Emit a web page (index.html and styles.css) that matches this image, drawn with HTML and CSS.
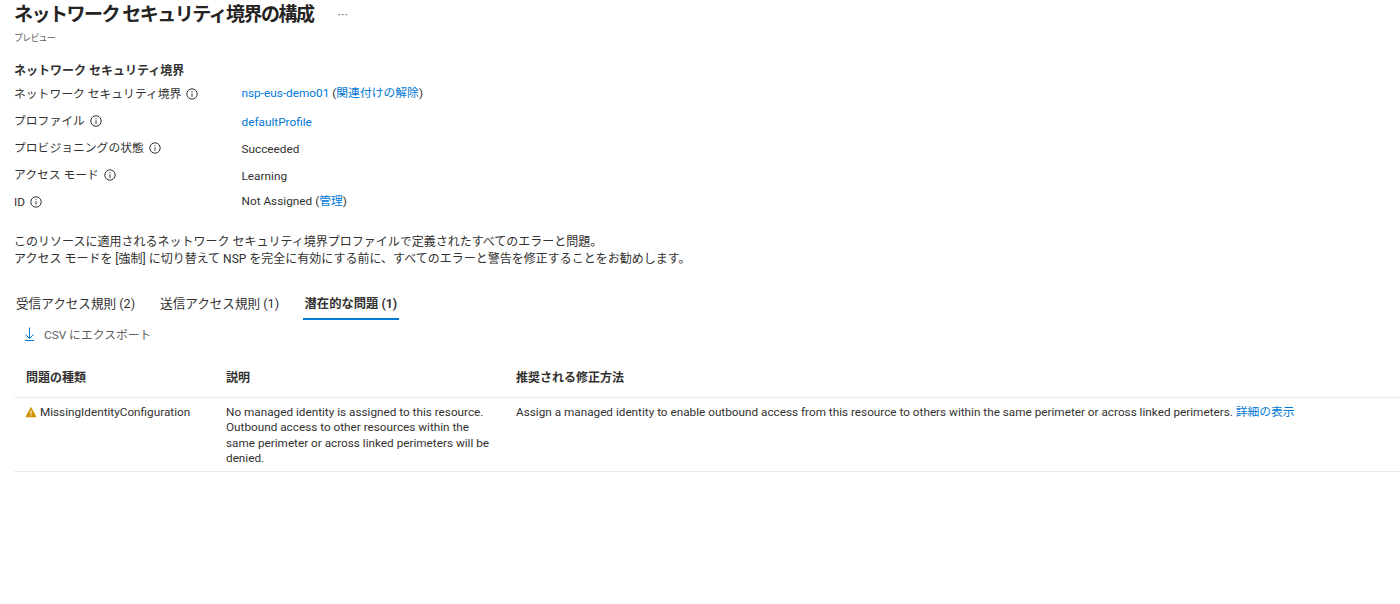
FILE: index.html
```html
<!DOCTYPE html>
<html lang="ja">
<head>
    <meta charset="UTF-8">
    <title>ネットワーク セキュリティ境界の構成</title>
    <link rel="stylesheet" href="styles.css">
</head>
<body>
    <header class="page-head">
        <div class="title-row">
            <h1>ネットワーク セキュリティ境界の構成</h1>
            <span class="more">···</span>
        </div>
        <div class="subtitle">プレビュー</div>
    </header>

    <h2 class="section-title">ネットワーク セキュリティ境界</h2>
    <div class="props">
        <div class="prop prop-a">
            <span class="label">ネットワーク セキュリティ境界 <svg class="info" viewBox="0 0 12 12"><circle cx="6" cy="6" r="5.2"/><path d="M6 5.3v3.4M6 3.2v1"/></svg></span>
            <span class="value"><a href="#">nsp-eus-demo01</a> (<a href="#">関連付けの解除</a>)</span>
        </div>
        <div class="prop prop-b first">
            <span class="label">プロファイル <svg class="info" viewBox="0 0 12 12"><circle cx="6" cy="6" r="5.2"/><path d="M6 5.3v3.4M6 3.2v1"/></svg></span>
            <span class="value"><a href="#">defaultProfile</a></span>
        </div>
        <div class="prop prop-b">
            <span class="label">プロビジョニングの状態 <svg class="info" viewBox="0 0 12 12"><circle cx="6" cy="6" r="5.2"/><path d="M6 5.3v3.4M6 3.2v1"/></svg></span>
            <span class="value">Succeeded</span>
        </div>
        <div class="prop prop-b">
            <span class="label">アクセス モード <svg class="info" viewBox="0 0 12 12"><circle cx="6" cy="6" r="5.2"/><path d="M6 5.3v3.4M6 3.2v1"/></svg></span>
            <span class="value">Learning</span>
        </div>
        <div class="prop prop-c">
            <span class="label">ID <svg class="info" viewBox="0 0 12 12"><circle cx="6" cy="6" r="5.2"/><path d="M6 5.3v3.4M6 3.2v1"/></svg></span>
            <span class="value">Not Assigned (<a href="#">管理</a>)</span>
        </div>
    </div>

    <p class="note">このリソースに適用されるネットワーク セキュリティ境界プロファイルで定義されたすべてのエラーと問題。<br>アクセス モードを [強制] に切り替えて NSP を完全に有効にする前に、すべてのエラーと警告を修正することをお勧めします。</p>

    <div class="tabs">
        <div class="tab">受信アクセス規則 (2)</div>
        <div class="tab">送信アクセス規則 (1)</div>
        <div class="tab active">潜在的な問題 (1)</div>
    </div>

    <div class="toolbar">
        <svg class="export-icon" viewBox="0 0 11 16"><path d="M5.5 .5v11M1.5 7.5l4 4 4-4M1 13.5h9"/></svg>
        <span>CSV にエクスポート</span>
    </div>

    <div class="table">
        <div class="row head">
            <div class="col col-type">問題の種類</div>
            <div class="col col-desc">説明</div>
            <div class="col col-fix">推奨される修正方法</div>
        </div>
        <div class="row body">
            <div class="col col-type">
                <svg class="warn" viewBox="0 0 12 12"><path d="M6 .8 11.6 11.3H.4z"/><path class="mark" d="M6 4.4v3.8M6 9.1v1"/></svg>
                MissingIdentityConfiguration
            </div>
            <div class="col col-desc">No managed identity is assigned to this resource. Outbound access to other resources within the same perimeter or across linked perimeters will be denied.</div>
            <div class="col col-fix">Assign a managed identity to enable outbound access from this resource to others within the same perimeter or across linked perimeters. <a href="#">詳細の表示</a></div>
        </div>
    </div>
</body>
</html>
```

FILE: styles.css
```css
html, body {
    height: 100%;
}

body {
    margin: 0;
    padding: 0 0 0 14px;
    overflow: hidden;
    background: #fff;
    color: #323130;
    font-family: Roboto, "Noto Sans CJK JP", sans-serif;
    font-size: 12px;
    line-height: 16px;
}

a {
    color: #0078d4;
    text-decoration: none;
}

.page-head {
    height: 63px;
}

.title-row {
    display: flex;
    align-items: center;
    height: 30px;
}

h1 {
    margin: 0;
    font-size: 19px;
    line-height: 30px;
    font-weight: 700;
    letter-spacing: -1.5px;
    color: #252423;
}

.more {
    margin-left: 24px;
    font-size: 13px;
    color: #605e5c;
}

.subtitle {
    font-size: 9px;
    line-height: 16px;
    letter-spacing: -0.8px;
    color: #605e5c;
}

.section-title {
    margin: 0;
    font-size: 12px;
    line-height: 16px;
    font-weight: 700;
}

.prop {
    display: flex;
    font-size: 11.8px;
}

.prop-a {
    margin-top: 7px;
}

.prop-b {
    margin-top: 11px;
}

.prop-b.first {
    margin-top: 13px;
}

.prop-c {
    margin-top: 9px;
}

.label {
    width: 227.5px;
    flex: none;
    margin-top: -2px;
}

.prop-a .label,
.prop-c .label {
    margin-top: 0;
}

.value {
    margin-top: -1px;
    padding-bottom: 1px;
}

.info {
    width: 12px;
    height: 12px;
    margin-left: 2px;
    vertical-align: -2px;
    fill: none;
    stroke: #323130;
    stroke-width: 1;
}

.note {
    margin: 24px 0 0;
    line-height: 17px;
}

.tabs {
    display: flex;
    margin-top: 22px;
    height: 30px;
    font-size: 12.6px;
}

.tab {
    margin-left: 2px;
    margin-right: 23px;
    padding-top: 6px;
}

.tab.active {
    margin-left: 1px;
    padding: 6px 1.5px 0;
    font-size: 12.3px;
    font-weight: 700;
    border-bottom: 2px solid #0078d4;
}

.toolbar {
    display: flex;
    align-items: center;
    height: 28px;
    margin-top: 1px;
    padding-left: 10px;
    font-size: 11.8px;
    color: #605e5c;
}

.export-icon {
    width: 11px;
    height: 16px;
    margin-right: 9px;
    fill: none;
    stroke: #0078d4;
    stroke-width: 1;
}

.table {
    margin-top: 9px;
}

.row {
    display: flex;
    border-bottom: 1px solid #edebe9;
}

.row.head {
    height: 39px;
    align-items: center;
    font-weight: 700;
}

.row.body {
    padding: 7px 0 4px;
    font-size: 11.75px;
    line-height: 15.4px;
}

.col {
    padding-left: 12px;
    flex: none;
}

.col-type {
    width: 188px;
}

.col-desc {
    width: 264px;
    padding-right: 14px;
}

.col-fix {
    flex: 1;
}

.warn {
    width: 12px;
    height: 12px;
    margin-left: -1px;
    vertical-align: -2px;
    fill: #d29200;
}

.warn .mark {
    fill: none;
    stroke: #fff;
    stroke-width: 1;
}
```
